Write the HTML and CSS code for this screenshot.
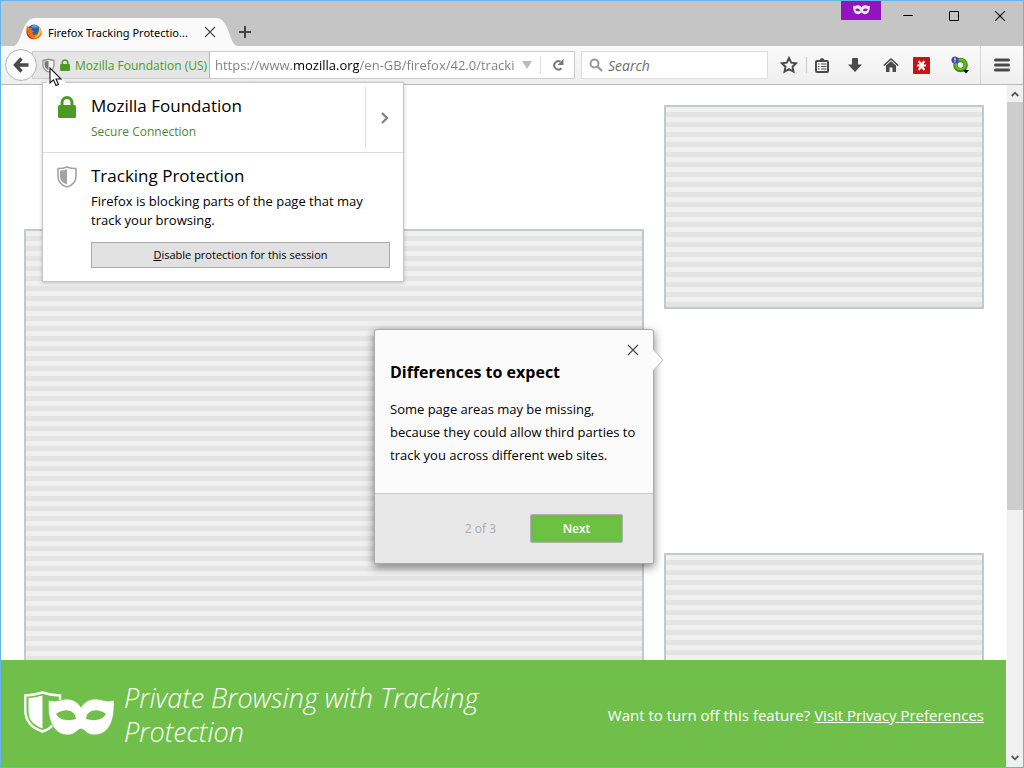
FILE: index.html
```html
<!DOCTYPE html>
<html lang="en-GB">
<head>
<meta charset="utf-8">
<meta name="viewport" content="width=device-width, initial-scale=1">
<title>Firefox Tracking Protection</title>
<link rel="stylesheet" href="styles.css">
</head>
<body>
<div class="window">
  <header class="titlebar">
    <div class="tab">
      <svg class="tab-shape" viewBox="0 0 224 28" preserveAspectRatio="none" aria-hidden="true"><path d="M0 28C9 28 8 0 22 0H202C216 0 215 28 224 28Z" fill="#fafafa"/></svg>
      <div class="tab-body">
        <svg class="favicon" viewBox="0 0 16 16" aria-hidden="true">
          <circle cx="8" cy="7.600" r="7" fill="#2b5fa8"/>
          <path d="M5 2C8 0 12 1 13 3C11 3 9 4 7 4Z" fill="#4fa3d8"/>
          <path d="M1 2L3.500 4L6 4L5.500 6L8 7.500L6 9C7 11 10 11 12 9C14 7 13 4 12 2C16 5 16.500 9 14.500 12C12 16 5 16.500 2 12.500C0 9.500 0 5 1 2Z" fill="#e8701a"/>
          <path d="M13 3C15.500 5 15.500 9 13.500 11C12.500 13 10 14 8 13.500C12 12 13.500 8 13 3Z" fill="#ffc92b"/>
          <path d="M1 5C1 10 4 14 9 15C5 16 1 13 .5 9Z" fill="#c73c19"/>
        </svg>
        <span class="tab-title">Firefox Tracking Protectio...</span>
        <button class="plain" type="button" aria-label="Close tab"><svg width="12" height="12" viewBox="0 0 12 12"><path d="M1 1L11 11M11 1L1 11" stroke="#444" stroke-width="1.100"/></svg></button>
      </div>
    </div>
    <button class="plain new-tab" type="button" aria-label="New tab"><svg width="14" height="14" viewBox="0 0 14 14"><path d="M7 1V13M1 7H13" stroke="#444" stroke-width="2"/></svg></button>
    <span class="private-badge">
      <svg width="17" height="10" viewBox="0 0 90 54" aria-label="Private window"><path fill="#f4e6fa" fill-rule="evenodd" d="M0 4C12 8 18 2 27 2C36 2 41 7 45 12C49 7 54 2 63 2C72 2 78 8 90 4C91 24 86 50 63 50C53 50 50 40 45 40C40 40 37 50 27 50C4 50 -1 24 0 4ZM11 24C17 35 30 36 37 31C35 19 20 15 11 24ZM79 24C73 35 60 36 53 31C55 19 70 15 79 24Z"/></svg>
    </span>
    <div class="window-controls">
      <button class="plain" type="button" aria-label="Minimise"><svg width="10" height="10" viewBox="0 0 10 10"><path d="M0 4.500H10" stroke="#000"/></svg></button>
      <button class="plain" type="button" aria-label="Maximise"><svg width="10" height="10" viewBox="0 0 10 10"><path d="M.5 .5H9.500V9.500H.5Z" fill="none" stroke="#000"/></svg></button>
      <button class="plain" type="button" aria-label="Close"><svg width="10" height="10" viewBox="0 0 10 10"><path d="M0 0L10 10M10 0L0 10" stroke="#000" stroke-width="1.100"/></svg></button>
    </div>
  </header>

  <nav class="toolbar" aria-label="Navigation">
    <button class="back" type="button" aria-label="Back"><svg width="16" height="16" viewBox="0 0 16 16"><path d="M8.500 1.500L2.500 8L8.500 14.500M3 8H15.500" fill="none" stroke="#4a4a4a" stroke-width="3.400"/></svg></button>
    <div class="urlbar">
      <button class="identity" type="button">
        <svg width="13" height="15" viewBox="0 0 20 22" aria-hidden="true"><path d="M1.500 3Q6 3 10 1.200Q14 3 18.500 3V10C18.500 16 14 19.500 10 21C6 19.500 1.500 16 1.500 10Z" fill="#f4f4f4" stroke="#8c8c8c" stroke-width="1.800"/><path d="M4 5Q7 5 10 3.800V18C6.500 16.500 4 14 4 10Z" fill="#777"/></svg>
        <svg width="10" height="12" viewBox="0 0 18 22" aria-hidden="true"><path d="M4 11V7A5 5.200 0 0 1 14 7V11" fill="none" stroke="#4c9a22" stroke-width="3"/><rect y="9" width="18" height="13" rx="1.500" fill="#4c9a22"/></svg>
        <span>Mozilla Foundation (US)</span>
      </button>
      <input class="url" type="text" aria-label="Address" value="https://www.mozilla.org/en-GB/firefox/42.0/tracki">
      <button class="plain" type="button" aria-label="Show history"><svg width="10" height="8" viewBox="0 0 10 8"><path d="M0 0H10L5 8Z" fill="#bbb"/></svg></button>
      <button class="reload" type="button" aria-label="Reload"><svg width="12" height="12" viewBox="0 0 12 12"><path d="M9.500 9.200A4.200 4.200 0 1 1 8.500 2.600" fill="none" stroke="#777" stroke-width="2"/><path d="M11.500 0V6H5.500Z" fill="#777"/></svg></button>
    </div>
    <label class="search">
      <svg width="14" height="14" viewBox="0 0 14 14" aria-hidden="true"><circle cx="5.500" cy="5.500" r="4" fill="none" stroke="#999" stroke-width="2"/><path d="M8.500 8.500L13 13" stroke="#999" stroke-width="2.400"/></svg>
      <input type="search" aria-label="Search" placeholder="Search">
    </label>
    <div class="tools">
      <button class="plain bookmark" type="button" aria-label="Bookmark this page"><svg width="18" height="18" viewBox="0 0 18 18"><path d="M9 2L11.200 6.600L16.200 7.200L12.500 10.700L13.500 15.700L9 13.200L4.500 15.700L5.500 10.700L1.800 7.200L6.800 6.600Z" fill="none" stroke="#4a4a4a" stroke-width="1.900"/></svg></button>
      <button class="plain library" type="button" aria-label="Show bookmarks"><svg width="14" height="15" viewBox="0 0 14 15"><rect x="1" y="3" width="12" height="11" rx="1" fill="none" stroke="#4a4a4a" stroke-width="2"/><path d="M4 3Q5 0 7 0Q9 0 10 3Z" fill="#4a4a4a"/><path d="M3 6H4.500M6 6H11.500M3 8.500H4.500M6 8.500H11.500M3 11H4.500M6 11H11.500" stroke="#4a4a4a" stroke-width="1.200"/></svg></button>
      <button class="plain" type="button" aria-label="Downloads"><svg width="16" height="16" viewBox="0 0 16 16"><path d="M5 2Q5 1 6 1H10Q11 1 11 2V7.500H15L8 15L1 7.500H5Z" fill="#4a4a4a"/></svg></button>
      <button class="plain" type="button" aria-label="Home"><svg width="16" height="16" viewBox="0 0 16 16"><path d="M.8 8.500L8 2L15.200 8.500" fill="none" stroke="#4a4a4a" stroke-width="1.600"/><path d="M3 8.500L8 4.200L13 8.500V15H9.500V10.500H6.500V15H3Z" fill="#4a4a4a"/></svg></button>
      <button class="plain lastpass" type="button" aria-label="LastPass"><svg width="17" height="17" viewBox="0 0 17 17"><rect width="17" height="17" rx="1" fill="#c71313"/><path d="M8.500 5.500V11.500M4 8.500H13M5.800 4L11.200 13M11.200 4L5.800 13" stroke="#fff" stroke-width="2.200"/></svg></button>
      <button class="plain addon" type="button" aria-label="Add-on"><svg width="18" height="18" viewBox="0 0 18 18"><circle cx="9.500" cy="9" r="5" fill="#fff" stroke="#3d8f12" stroke-width="4.600"/><circle cx="9.500" cy="8.500" r="4.800" fill="none" stroke="#6dc02a" stroke-width="2"/><circle cx="4" cy="4" r="3.600" fill="#4444b5"/><path d="M4 1.800V4.500M4 5.200V6.200" stroke="#fff" stroke-width="1.200"/><path d="M12 14H18L15 17.500Z" fill="#000"/></svg></button>
      <button class="plain menu" type="button" aria-label="Open menu"><svg width="16" height="14" viewBox="0 0 16 14"><path d="M1.500 2H14.500M1.500 7H14.500M1.500 12H14.500" stroke="#4a4a4a" stroke-width="3" stroke-linecap="round"/></svg></button>
    </div>
  </nav>

  <div class="viewport">
    <div class="page">
      <main class="blocks">
        <div class="block block-main"></div>
        <aside class="rail">
          <div class="block block-side"></div>
          <div class="block block-side"></div>
        </aside>
      </main>
      <footer class="banner">
        <svg class="banner-logo" width="90" height="45" viewBox="0 0 90 45" aria-hidden="true">
          <path d="M36 9V4.500Q26 4 18.500 1.500Q10 4 1.300 4.500V19C1.300 31 8 37 18.500 40.500Q25 38.500 29 34" fill="none" stroke="#fff" stroke-width="2.400"/>
          <path d="M18.500 4.500V37.500C9 33.500 4.500 29 4.500 20V7Q12 6.500 18.500 4.500Z" fill="#fff"/>
          <path d="M24.500 9C33 12 36 8 43 8C50 8 54 12 57 16C60 12 64 8 71 8C79 8 82 12 90 9C91 26 87 44 70 44C62 44 61 38 57 38C53 38 52 44 44 44C28 44 23 26 24.500 9Z" fill="#fff" stroke="#70bf4b" stroke-width=".8"/>
          <path d="M32 23C36 30 45 30 52 28C51 18 40 17 32 23ZM82 23C78 30 69 30 62 28C63 18 74 17 82 23Z" fill="#70bf4b"/>
        </svg>
        <h1 class="banner-title">Private Browsing with Tracking Protection</h1>
        <p class="banner-text">Want to turn off this feature? <a href="#preferences">Visit Privacy Preferences</a></p>
      </footer>
    </div>
    <div class="scrollbar" aria-hidden="true">
      <svg width="8" height="6" viewBox="0 0 8 6"><path d="M.7 5L4 1.700L7.300 5" fill="none" stroke="#555" stroke-width="1.800"/></svg>
      <div class="track"><div class="thumb"></div></div>
      <svg width="8" height="6" viewBox="0 0 8 6"><path d="M.7 1L4 4.300L7.300 1" fill="none" stroke="#555" stroke-width="1.800"/></svg>
    </div>
  </div>

  <section class="doorhanger" aria-label="Site identity">
    <svg class="doorhanger-arrow" width="22" height="10" viewBox="0 0 22 10" aria-hidden="true"><path d="M0 10L11 0L22 10Z" fill="#fff"/></svg>
    <div class="row connection">
      <svg class="row-icon" width="18" height="22" viewBox="0 0 18 22" aria-hidden="true"><path d="M4 11V6.500A5 5 0 0 1 14 6.500V11" fill="none" stroke="#4c9a22" stroke-width="3"/><rect y="9" width="18" height="13" rx="1.500" fill="#4c9a22"/></svg>
      <div class="row-text">
        <h2>Mozilla Foundation</h2>
        <p class="secure">Secure Connection</p>
      </div>
      <button class="expand" type="button" aria-label="Show connection details"><svg width="8" height="12" viewBox="0 0 8 12"><path d="M1 1L6 6L1 11" fill="none" stroke="#808080" stroke-width="2.200"/></svg></button>
    </div>
    <div class="row tracking">
      <svg class="row-icon" width="20" height="22" viewBox="0 0 20 22" aria-hidden="true"><path d="M1 2.500Q6 2.500 10 .9Q14 2.500 19 2.500V10C19 16 15 19.500 10 21C5 19.500 1 16 1 10Z" fill="#fff" stroke="#a3a3a3" stroke-width="1.600"/><path d="M3 4.500Q7 4.500 10 3.200V18.500C5.500 17 3 14 3 10Z" fill="#a3a3a3"/></svg>
      <div class="row-text">
        <h2>Tracking Protection</h2>
        <p class="explain">Firefox is blocking parts of the page that may track your browsing.</p>
        <button class="disable" type="button"><u>D</u>isable protection for this session</button>
      </div>
    </div>
  </section>

  <section class="tour" role="dialog" aria-labelledby="tour-title">
    <svg class="tour-arrow" width="11" height="22" viewBox="0 0 11 22" aria-hidden="true"><path d="M0 0L10 11L0 22" fill="#fcfcfc" stroke="#bbb"/></svg>
    <div class="tour-body">
      <button class="plain tour-close" type="button" aria-label="Close"><svg width="12" height="12" viewBox="0 0 12 12"><path d="M1 1L11 11M11 1L1 11" stroke="#444" stroke-width="1.100"/></svg></button>
      <h2 id="tour-title">Differences to expect</h2>
      <p>Some page areas may be missing, because they could allow third parties to track you across different web sites.</p>
    </div>
    <div class="tour-footer">
      <span>2 of 3</span>
      <button class="next" type="button">Next</button>
    </div>
  </section>

  <svg class="pointer" width="13" height="20" viewBox="0 0 13 20" aria-hidden="true"><path d="M1 1V16L4.500 12.800L7 18.500L9.500 17.500L7 12H12Z" fill="#fff" stroke="#111" stroke-width="1.100"/></svg>
</div>
</body>
</html>
```
FILE: styles.css
```css
* { box-sizing: border-box; }

body {
  margin: 0;
  font-family: "Open Sans", "Noto Sans", sans-serif;
  font-size: 12px;
  color: #000;
}

h1, h2, p { margin: 0; font-weight: 400; }

button, input { font: inherit; color: inherit; }

svg { display: block; flex: none; }

.plain {
  display: flex;
  align-items: center;
  justify-content: center;
  padding: 0;
  border: 0;
  background: none;
}

.window {
  position: relative;
  display: flex;
  flex-direction: column;
  height: 100vh;
  border: 1px solid #66b5ea;
  background: #fff;
  overflow: hidden;
}

/* Title bar */
.titlebar {
  display: flex;
  align-items: flex-end;
  height: 45px;
  padding-left: 12px;
  background: #c5c5c5;
}

.tab { display: grid; width: 225px; height: 28px; }
.tab-shape, .tab-body { grid-area: 1 / 1; }
.tab-shape { width: 100%; height: 100%; }
.tab-body { display: flex; align-items: center; min-width: 0; padding: 0 22px 0 13px; }
.favicon { width: 16px; height: 16px; }
.tab-title { flex: 1; min-width: 0; padding-left: 6px; font-family: "Noto Sans", sans-serif; font-size: 11px; white-space: nowrap; }
.new-tab { height: 28px; }

.private-badge {
  display: flex;
  align-self: flex-start;
  align-items: center;
  justify-content: center;
  width: 40px;
  height: 19px;
  margin-left: auto;
  padding-bottom: 2px;
  background: #9413c0;
}

.window-controls { display: flex; align-self: flex-start; padding-left: 4px; }
.window-controls .plain { width: 46px; height: 30px; }

/* Toolbar */
.toolbar {
  display: flex;
  align-items: center;
  height: 39px;
  padding-left: 4px;
  border-bottom: 1px solid #b9b9b9;
  background: linear-gradient(#fafafa, #efefef);
}

.back {
  display: flex;
  align-items: center;
  justify-content: center;
  width: 32px;
  height: 32px;
  padding: 0;
  border: 1px solid #b5b5b5;
  border-radius: 50%;
  background: #fbfbfb;
  z-index: 1;
}

.urlbar {
  display: flex;
  flex: 1;
  height: 28px;
  margin-left: -5px;
  border: 1px solid #ccc;
  background: #fff;
}
.urlbar .plain { padding: 0 8px 0 7px; }

.identity {
  display: flex;
  align-items: center;
  gap: 5px;
  flex: none;
  width: 177px;
  padding: 0 0 0 9px;
  border: 0;
  border-right: 1px solid #bbb;
  background: #e5e5e5;
  color: #4c9a22;
  white-space: nowrap;
}

.url {
  flex: 1;
  min-width: 0;
  padding: 0 0 0 5px;
  border: 0;
  color: transparent;
  font-size: 13px;
  background: linear-gradient(90deg, #7d7d7d 82px, #000 82px, #000 149px, #7d7d7d 149px);
  -webkit-background-clip: text;
  background-clip: text;
}

.reload {
  display: flex;
  align-items: center;
  justify-content: center;
  width: 34px;
  margin: 4px 0;
  padding: 0;
  border: 0;
  border-left: 1px solid #ddd;
  background: none;
}

.search {
  display: flex;
  align-items: center;
  gap: 5px;
  width: 187px;
  height: 28px;
  margin-left: 6px;
  padding-left: 7px;
  border: 1px solid #ddd;
  background: #fff;
}
.search input {
  flex: 1;
  min-width: 0;
  padding: 0;
  border: 0;
  background: none;
  font-size: 14px;
}
.search input::placeholder { color: #6d6d6d; font-style: italic; }

.tools { display: flex; align-items: center; height: 100%; padding-left: 3px; }
.tools .plain { width: 36px; height: 100%; }
.tools .bookmark { height: 16px; border-right: 1px solid #ccc; }
.tools .library { width: 30px; }
.tools .lastpass { width: 24px; }
.tools .addon { width: 47px; padding-left: 6px; }
.tools .menu { width: 43px; border-left: 1px solid #d5d5d5; }

/* Page */
.viewport { display: flex; flex: 1; min-height: 0; }
.page { display: flex; flex: 1; flex-direction: column; min-width: 0; }

.blocks {
  display: grid;
  grid-template-columns: 1fr 320px;
  gap: 20px;
  flex: 1;
  min-height: 0;
  padding: 20px 22px 0 23px;
  overflow: hidden;
}
.block {
  border: 2px solid #c2c9cc;
  background: repeating-linear-gradient(#f0f0f0 0 5px, #e4e4e4 5px 10px);
}
.block-main { height: 700px; margin-top: 124px; }
.rail { display: grid; align-content: start; gap: 244px; }
.block-side { height: 204px; }

.banner {
  display: flex;
  align-items: center;
  gap: 10px;
  height: 107px;
  padding: 0 22px 0 23px;
  background: #70bf4b;
  color: #fff;
}
.banner-title {
  width: 400px;
  padding-top: 2px;
  font-size: 27px;
  font-style: italic;
  font-weight: 300;
  line-height: 34px;
}
.banner-text { margin-left: auto; padding-top: 2px; font-size: 15px; white-space: nowrap; }
.banner-text a { color: inherit; }

.scrollbar {
  display: flex;
  flex-direction: column;
  align-items: center;
  gap: 5px;
  width: 17px;
  padding: 6px 0;
  border-left: 1px solid #fff;
  background: #f0f0f0;
}
.track { flex: 1; align-self: stretch; }
.thumb { height: 63%; background: #cdcdcd; }

/* Site identity panel */
.doorhanger {
  position: absolute;
  top: 81px;
  left: 41px;
  width: 362px;
  border: 1px solid #c4c4c4;
  background: #fff;
  box-shadow: 0 1px 4px rgba(0, 0, 0, .2);
}
.doorhanger-arrow { position: absolute; top: -9px; left: 2px; }
.row { display: flex; }
.row-icon { width: 20px; margin: 13px 14px 0; }
.row-text { flex: 1; }
.row h2 { font-size: 17px; line-height: 24px; }
.connection { height: 70px; border-bottom: 1px solid #ddd; }
.connection .row-text { padding-top: 11px; }
.secure { padding-top: 5px; color: #4c8a2c; line-height: 18px; }
.expand {
  display: flex;
  align-items: center;
  justify-content: center;
  width: 38px;
  margin: 4px 0;
  padding: 0;
  border: 0;
  border-left: 1px solid #ddd;
  background: none;
}
.tracking { padding-bottom: 13px; }
.tracking .row-text { padding: 11px 13px 0 0; }
.explain { padding: 4px 12px 0 0; font-size: 13px; line-height: 19px; }
.disable {
  width: 100%;
  height: 26px;
  margin-top: 12px;
  padding: 0 0 2px;
  border: 1px solid #aaa;
  background: #e1e1e1;
  font-size: 11px;
}

/* Tour panel */
.tour {
  position: absolute;
  top: 328px;
  left: 373px;
  width: 280px;
  border: 1px solid #aaa;
  border-radius: 3px 3px 0 0;
  background: #fbfbfb;
  box-shadow: 0 3px 10px rgba(0, 0, 0, .5);
}
.tour-arrow { position: absolute; top: 19px; left: 278px; }
.tour-body { display: flex; flex-direction: column; padding: 14px 14px 26px 15px; }
.tour-close { align-self: flex-end; }
.tour h2 { padding: 4px 0 14px; font-size: 16px; font-weight: 700; line-height: 24px; }
.tour p { font-size: 13px; line-height: 23px; }
.tour-footer {
  display: flex;
  align-items: center;
  justify-content: flex-end;
  gap: 34px;
  height: 70px;
  padding-right: 30px;
  border-top: 1px solid #c8c8c8;
  background: #e8e8e8;
  color: #aaa;
}
.next {
  width: 93px;
  height: 29px;
  padding: 0;
  border: 1px solid #b0b0b0;
  border-radius: 2px;
  background: #6cc142;
  color: #fff;
  font-weight: 600;
}

.pointer { position: absolute; top: 66px; left: 48px; }
```
